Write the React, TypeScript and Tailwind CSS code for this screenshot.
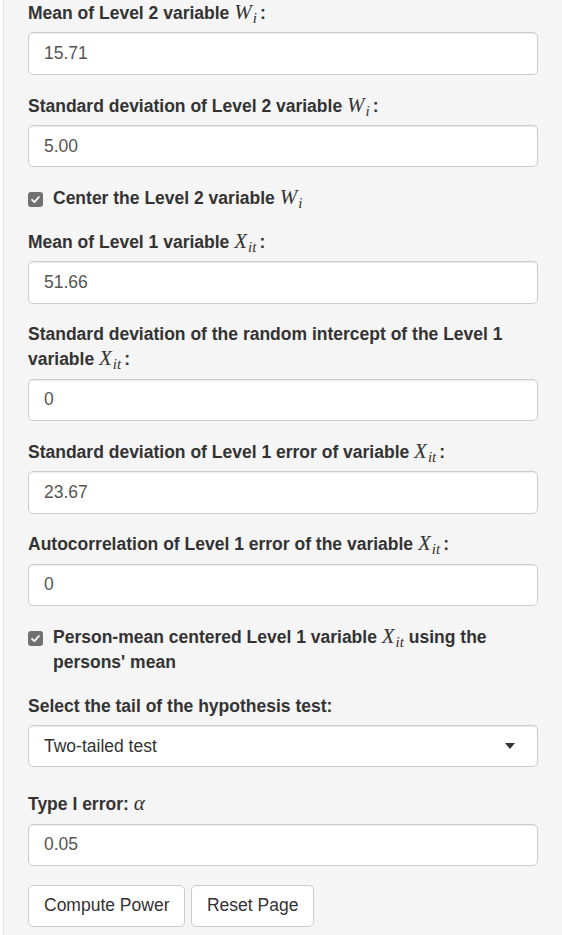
import * as React from "react"

const sans = "font-['Liberation_Sans',Arial,sans-serif]"

// MathJax-like inline variable: italic serif letter with a lowered subscript
function MathVar({ v, sub }: { v: string; sub?: string }) {
  return (
    <span className="font-['Liberation_Serif','DejaVu_Serif',serif] italic font-normal text-[21px] leading-none">
      {v}
      {sub && <span className="text-[15px] [vertical-align:-4px] ml-[1px]">{sub}</span>}
    </span>
  )
}

function Label({ children }: { children: React.ReactNode }) {
  return <label className="block font-bold text-[#333] mb-[6.25px]">{children}</label>
}

function TextInput({ value }: { value: string }) {
  return (
    <input
      type="text"
      defaultValue={value}
      className={`block w-full h-[42.5px] px-[15px] py-[7.5px] text-[17.5px] text-[#555] bg-white border border-[#ccc] rounded-[5px] shadow-[inset_0_1px_1px_rgba(0,0,0,0.075)] outline-none ${sans}`}
    />
  )
}

function Field({ label, value }: { label: React.ReactNode; value: string }) {
  return (
    <div className="mb-[18.75px]">
      <Label>{label}</Label>
      <TextInput value={value} />
    </div>
  )
}

function Check({ children }: { children: React.ReactNode }) {
  return (
    <div className="mb-[18.75px] flex">
      <span className="mt-[6px] mr-[10px] flex h-[15px] w-[15px] shrink-0 items-center justify-center rounded-[3px] bg-[#717171]">
        <svg viewBox="0 0 12 12" className="h-[11px] w-[11px]">
          <path d="M2.2 6.3 L4.8 8.8 L9.8 3.3" fill="none" stroke="#fff" strokeWidth="1.9" strokeLinecap="round" strokeLinejoin="round" />
        </svg>
      </span>
      <span className="font-bold text-[#333]">{children}</span>
    </div>
  )
}

function Colon() {
  return <span className="ml-[3px]">:</span>
}

export default function App() {
  return (
    <div className={`h-[935px] overflow-hidden bg-white ${sans} text-[17.5px] leading-[25px]`}>
      <div className="ml-[3px] w-[560px] border-x border-b border-[#e3e3e3] bg-[#f5f5f5] px-[24px] pt-[1px] pb-[24px]">
        <Field label={<>Mean of Level 2 variable <MathVar v="W" sub="i" /><Colon /></>} value="15.71" />
        <Field label={<>Standard deviation of Level 2 variable <MathVar v="W" sub="i" /><Colon /></>} value="5.00" />
        <Check>Center the Level 2 variable <MathVar v="W" sub="i" /></Check>
        <Field label={<>Mean of Level 1 variable <MathVar v="X" sub="it" /><Colon /></>} value="51.66" />
        <Field
          label={<>Standard deviation of the random intercept of the Level 1 variable <MathVar v="X" sub="it" /><Colon /></>}
          value="0"
        />
        <Field label={<>Standard deviation of Level 1 error of variable <MathVar v="X" sub="it" /><Colon /></>} value="23.67" />
        <Field label={<>Autocorrelation of Level 1 error of the variable <MathVar v="X" sub="it" /><Colon /></>} value="0" />
        <Check>
          Person-mean centered Level 1 variable <MathVar v="X" sub="it" /> using the persons' mean
        </Check>

        <div className="mb-[25px]">
          <Label>Select the tail of the hypothesis test:</Label>
          <div className="relative flex h-[42.5px] items-center rounded-[5px] border border-[#ccc] bg-white px-[15px] text-[#333] shadow-[inset_0_1px_1px_rgba(0,0,0,0.075)]">
            <span>Two-tailed test</span>
            <span className="absolute right-[22px] top-[17px] h-0 w-0 border-x-[5.5px] border-t-[6px] border-x-transparent border-t-[#333]" />
          </div>
        </div>

        <Field label={<>Type I error: <MathVar v="α" /></>} value="0.05" />

        <div className="flex gap-[5.5px]">
          <button className="h-[42px] rounded-[5px] border border-[#ccc] bg-white px-[15px] text-[#333]">Compute Power</button>
          <button className="h-[42px] rounded-[5px] border border-[#ccc] bg-white px-[15px] text-[#333]">Reset Page</button>
        </div>
      </div>
    </div>
  )
}
